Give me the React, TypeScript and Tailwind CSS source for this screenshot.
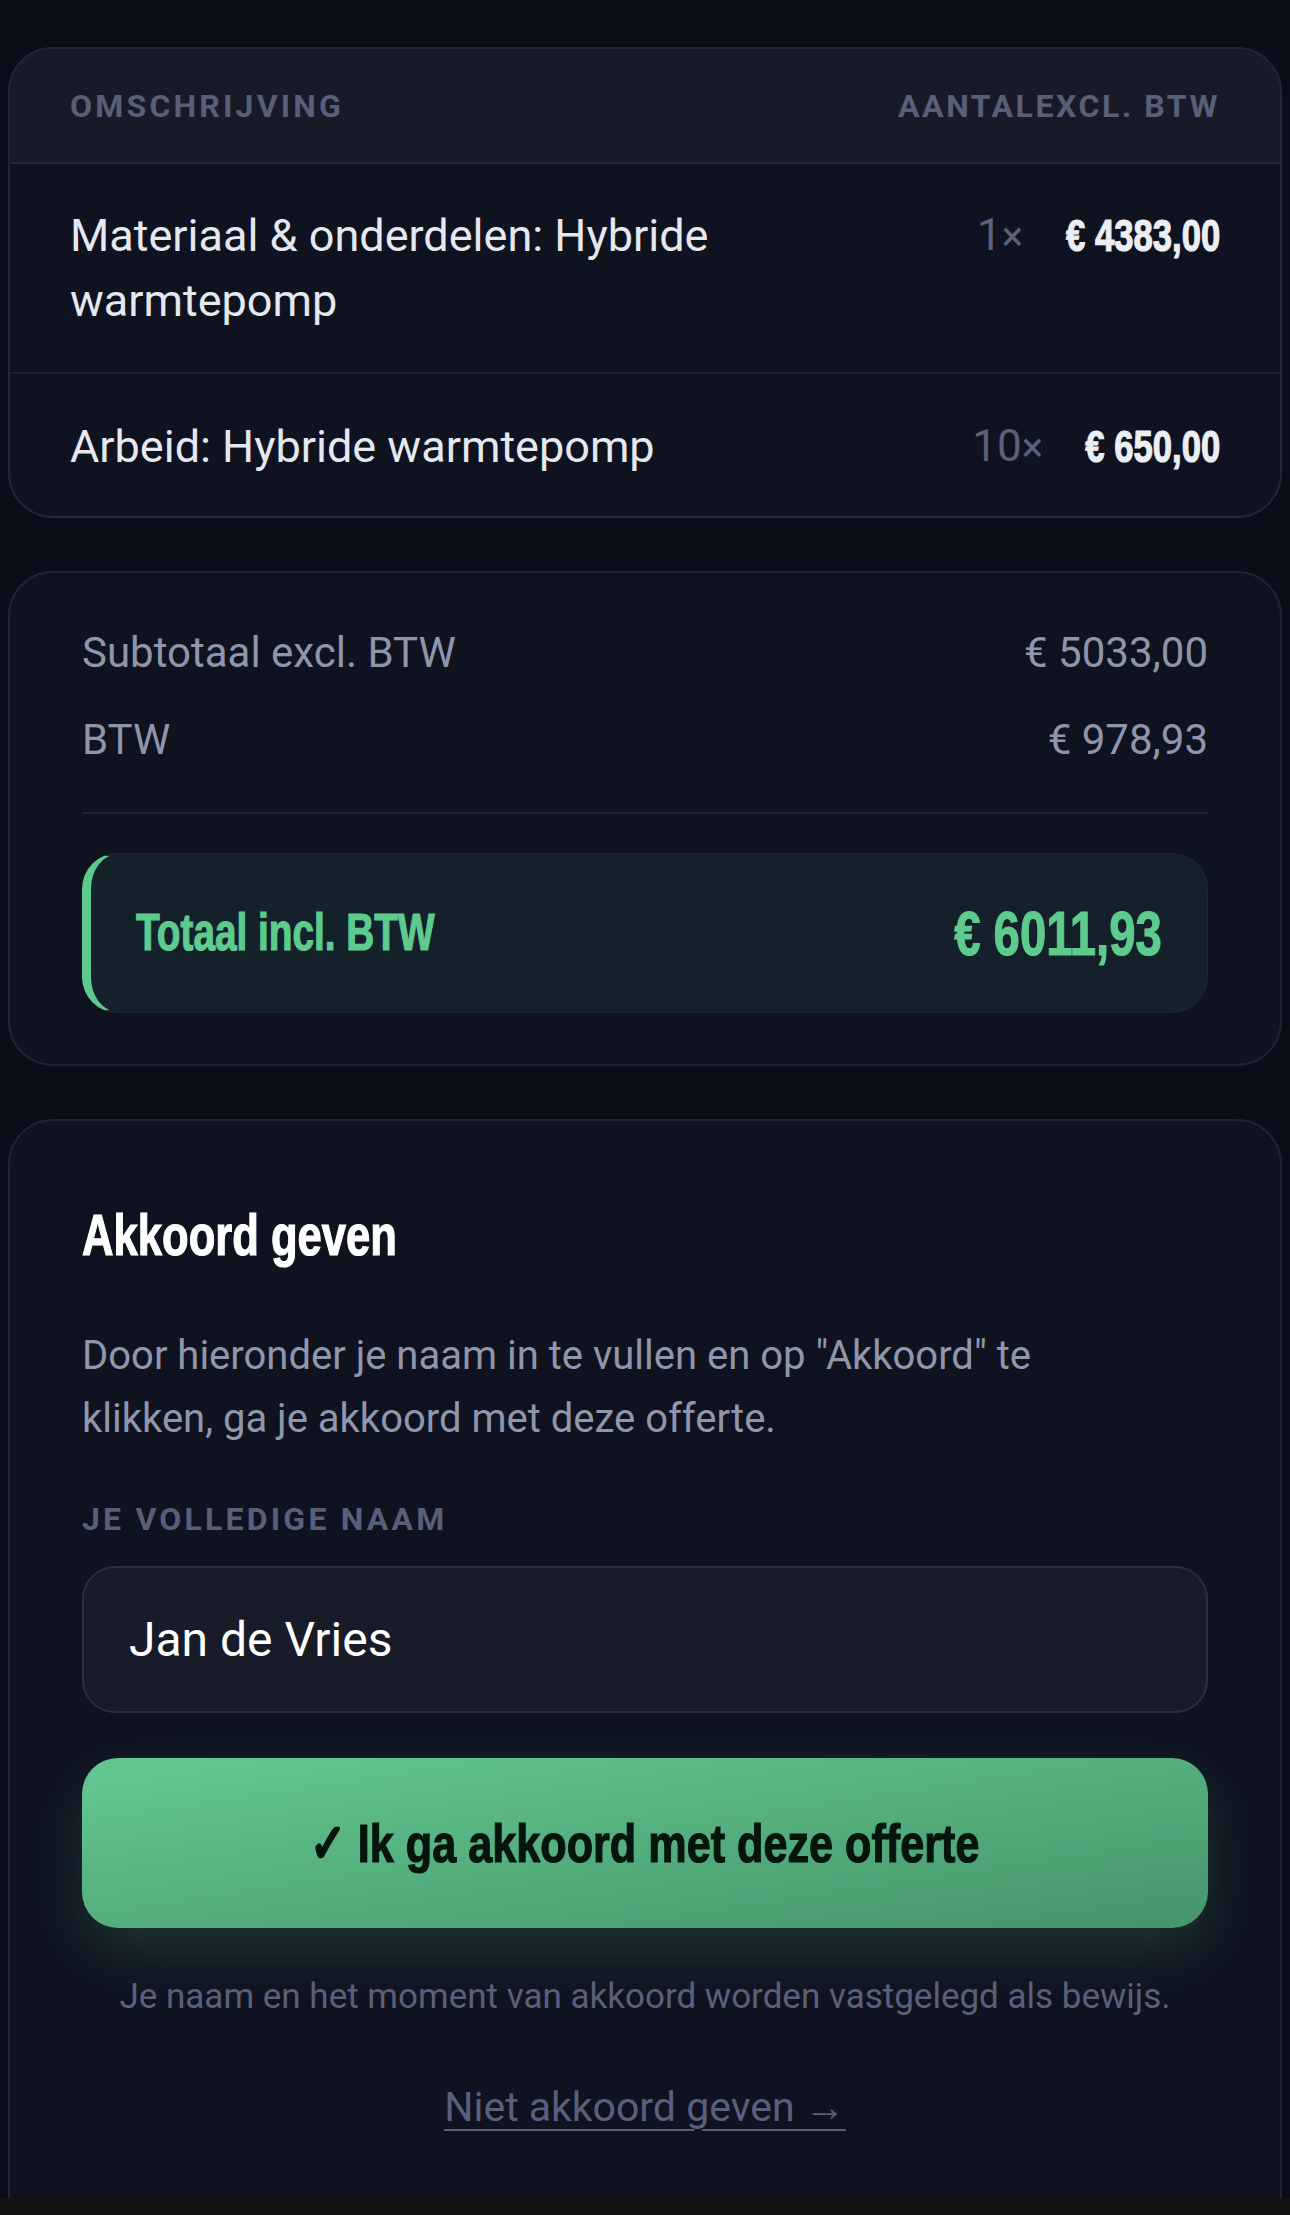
import React from 'react';

// condensed heavy display face: Liberation Sans Bold squeezed horizontally, stroked a bit heavier
const cond = "inline-block whitespace-nowrap font-['Liberation_Sans',Arial,sans-serif] font-bold [-webkit-text-stroke:1.2px_currentColor]";

interface LineItem {
  description: string;
  qty: number;
  amount: string;
  amountWidth: string;
}

const items: LineItem[] = [
  { description: 'Materiaal & onderdelen: Hybride warmtepomp', qty: 1, amount: '€ 4383,00', amountWidth: 'w-[152px]' },
  { description: 'Arbeid: Hybride warmtepomp', qty: 10, amount: '€ 650,00', amountWidth: 'w-[132px]' },
];

const App: React.FC = () => {
  return (
    <div className="w-full h-[2215px] flex flex-col bg-[#0b0e18] font-['Roboto',sans-serif] overflow-hidden">
      <div className="flex-1 overflow-hidden px-[8px] pt-[47px] flex flex-col gap-[53px]">
        {/* Line items */}
        <div className="shrink-0 rounded-[45px] border-2 border-[#222636] bg-[#0f1320] overflow-hidden">
          <div className="h-[115px] px-[60px] flex items-center justify-between bg-[#181b27] border-b-2 border-[#242838]">
            <span className="text-[32px] font-bold tracking-[0.1em] text-[#5a5f78]">OMSCHRIJVING</span>
            <span className="text-[32px] font-bold tracking-[0.08em] text-[#5a5f78]">AANTALEXCL. BTW</span>
          </div>
          {items.map((item, idx) => (
            <div
              key={idx}
              className={`flex items-start px-[60px] ${idx === 0 ? 'py-[39px] border-b-2 border-[#1c2030]' : 'pt-[40px] pb-[36px]'}`}
            >
              <div className="flex-1 pr-[60px] text-[45px] leading-[65px] text-[#e6e8f0]">{item.description}</div>
              <div className="text-[44px] leading-[65px] text-[#5b6178]">
                {item.qty}<span className="text-[40px]">×</span>
              </div>
              <div className={`${item.amountWidth} ml-[45px] flex justify-end`}>
                <span className={`${cond} origin-right scale-x-[0.77] text-[45px] leading-[65px] text-[#eceef4]`}>
                  {item.amount}
                </span>
              </div>
            </div>
          ))}
        </div>

        {/* Totals */}
        <div className="shrink-0 rounded-[45px] border-2 border-[#1f2333] bg-[#0f1320] px-[72px] pt-[50px] pb-[51px]">
          <div className="flex flex-col gap-[27px]">
            <div className="flex justify-between text-[42px] leading-[60px] text-[#9096aa]">
              <span>Subtotaal excl. BTW</span>
              <span>€ 5033,00</span>
            </div>
            <div className="flex justify-between text-[42px] leading-[60px] text-[#9096aa]">
              <span>BTW</span>
              <span>€ 978,93</span>
            </div>
          </div>
          <div className="mt-[42px] h-[2px] bg-[#1f2333]" />
          <div className="mt-[39px] h-[160px] rounded-[36px] border border-[#1b2a31] border-l-[9px] border-l-[#5ecb8e] bg-[#15212a] pl-[45px] pr-[45px] flex items-center justify-between">
            <span className={`${cond} origin-left scale-x-[0.76] text-[51px] text-[#5ecb8e]`}>Totaal incl. BTW</span>
            <span className={`${cond} origin-right scale-x-[0.75] text-[63px] text-[#5ecb8e]`}>€ 6011,93</span>
          </div>
        </div>

        {/* Akkoord */}
        <div className="shrink-0 rounded-[45px] border-2 border-[#1f2333] bg-[#0f1320] px-[72px] pt-[82px] pb-[160px]">
          <h2 className={`${cond} origin-left scale-x-[0.765] text-[57px] leading-[64px] text-white`}>Akkoord geven</h2>
          <p className="mt-[57px] max-w-[1080px] text-[40px] leading-[63px] text-[#9197ab]">
            Door hieronder je naam in te vullen en op "Akkoord" te klikken, ga je akkoord met deze offerte.
          </p>
          <div className="mt-[49px] text-[32px] leading-[40px] font-bold tracking-[0.1em] text-[#5a5f78]">
            JE VOLLEDIGE NAAM
          </div>
          <div className="mt-[27px] h-[147px] rounded-[33px] border-2 border-[#2a2e3e] bg-[#181b28] px-[45px] flex items-center text-[48px] text-white">
            Jan de Vries
          </div>
          <button className="mt-[45px] w-full h-[170px] rounded-[36px] bg-gradient-to-br from-[#64c891] to-[#45956a] shadow-[0_24px_60px_rgba(94,203,142,0.18)] flex items-center justify-center">
            <span className={`${cond} origin-center scale-x-[0.8] text-[54px] text-[#06150c]`}>✓ Ik ga akkoord met deze offerte</span>
          </button>
          <p className="mt-[44px] text-center whitespace-nowrap text-[35px] leading-[50px] text-[#5b6078]">
            Je naam en het moment van akkoord worden vastgelegd als bewijs.
          </p>
          <div className="mt-[57px] text-center text-[41px] leading-[56px] text-[#5a5f7c]">
            <a className="underline underline-offset-[8px] decoration-2">Niet akkoord geven →</a>
          </div>
        </div>
      </div>
      <div className="h-[17px] bg-[#131313] shrink-0" />
    </div>
  );
};

export default App;
